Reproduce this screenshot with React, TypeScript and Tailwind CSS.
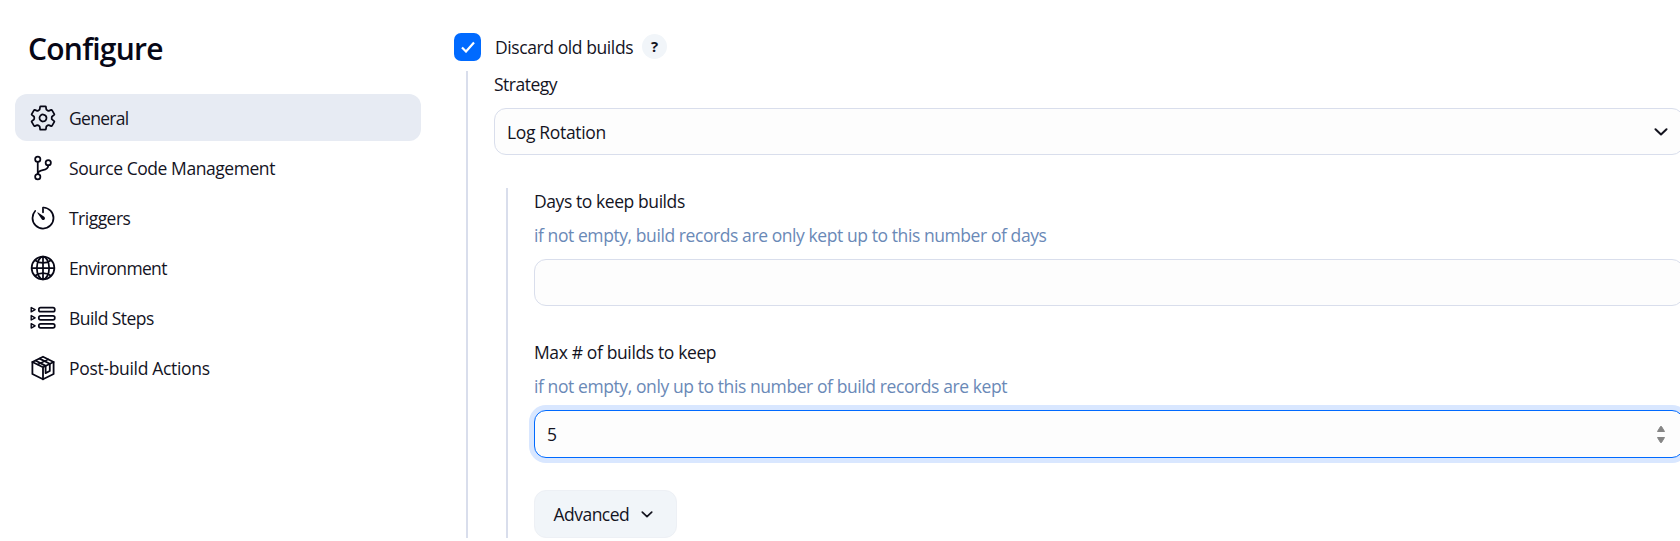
import type { ReactNode } from "react";
import { IoSettingsOutline, IoGitBranchOutline, IoTimerOutline, IoGlobeOutline } from "react-icons/io5";

function StepsIcon() {
  return (
    <svg viewBox="0 0 26 26" className="size-[26px]" fill="none" stroke="currentColor" strokeWidth="1.7" strokeLinejoin="round">
      <path d="M1.200 2.500v4.400l3.900-2.200zM1.200 10.600v4.400l3.900-2.200zM1.200 18.700v4.400l3.900-2.200z" strokeWidth="1.400" />
      <rect x="8.800" y="2.700" width="16" height="4" rx="1.800" />
      <rect x="8.800" y="10.800" width="16" height="4" rx="1.800" />
      <rect x="8.800" y="18.900" width="16" height="4" rx="1.800" />
    </svg>
  );
}

function PackageIcon() {
  return (
    <svg viewBox="0 0 26 26" className="size-[26px]" fill="none" stroke="currentColor" strokeWidth="1.8" strokeLinejoin="round" strokeLinecap="round">
      <path d="M13 1.700 23.600 7v12L13 24.300 2.400 19V7z" />
      <path d="M2.400 7 13 12.300 23.600 7M13 12.300v12" />
      <path d="M9.600 3.600 19.800 8.700v7.300l-4.200 2.100V10.900L5.900 5.800" />
      <path d="M7.700 9.500 18.300 4.300" strokeWidth="1.400" />
    </svg>
  );
}

function Chevron({ className }: { className: string }) {
  return (
    <svg viewBox="0 0 14 8" className={className} fill="none" stroke="#14141f" strokeWidth="2" strokeLinecap="round" strokeLinejoin="round">
      <path d="m1.500 1.200 5.500 5.300 5.500-5.300" />
    </svg>
  );
}

const items: { label: string; icon: ReactNode; active?: boolean; tracking: string }[] = [
  { label: "General", icon: <IoSettingsOutline />, active: true, tracking: "tracking-[-0.7px]" },
  { label: "Source Code Management", icon: <IoGitBranchOutline />, tracking: "tracking-[-0.44px]" },
  { label: "Triggers", icon: <IoTimerOutline />, tracking: "tracking-[-0.52px]" },
  { label: "Environment", icon: <IoGlobeOutline />, tracking: "tracking-[-0.66px]" },
  { label: "Build Steps", icon: <StepsIcon />, tracking: "tracking-[-0.56px]" },
  { label: "Post-build Actions", icon: <PackageIcon />, tracking: "tracking-[-0.32px]" },
];

export default function App() {
  return (
    <div className="flex h-[541px] w-[1680px] overflow-hidden bg-white font-['Open_Sans',sans-serif] text-[17.5px] text-[#14141f]">
      <aside className="w-[454px] shrink-0 pt-[28px] pl-[15px]">
        <h1 className="h-[66px] pl-[13px] text-[30px] leading-[41px] font-semibold tracking-[-0.75px] text-[#070716]">Configure</h1>
        <nav className="flex w-[406px] flex-col gap-[3px]">
          {items.map((i) => (
            <a key={i.label} className={`flex h-[47px] items-center rounded-xl pl-[13.5px] ${i.active ? "bg-[#e7ebf3]" : ""}`}>
              <span className="flex size-7 items-center justify-center text-[28px] text-[#070716]">{i.icon}</span>
              <span className={`ml-[12.5px] pt-[2px] ${i.tracking}`}>{i.label}</span>
            </a>
          ))}
        </nav>
      </aside>
      <main className="w-[1230px] shrink-0 pt-[33px]">
        <div className="flex h-[38px] items-start">
          <span className="flex h-7 w-[27px] items-center justify-center rounded-[7px] bg-[#006aff]">
            <svg viewBox="0 0 14 12" className="h-3 w-3.5" fill="none" stroke="white" strokeWidth="2.2"><path d="m1 6.500 4 4L13 1.500" /></svg>
          </span>
          <span className="ml-3.5 leading-[28px] tracking-[-0.41px]">Discard old builds</span>
          <span className="mt-px ml-[9px] flex size-[25px] items-center justify-center rounded-full bg-[#f1f5f9] text-[15px] font-bold">?</span>
        </div>
        <div className="ml-3 h-[467px] border-l-2 border-[#d9deec] pl-[26px]">
          <div className="h-[37px] leading-[26px] tracking-[-0.5px]">Strategy</div>
          <div className="flex h-[47px] items-center justify-between rounded-xl border border-[#d9deec] bg-[#fdfdfd] pr-[15px] pl-3">
            <span className="pt-[2px] tracking-[-0.34px]">Log Rotation</span>
            <Chevron className="h-2 w-3.5" />
          </div>
          <div className="mt-[33px] ml-3 h-[350px] border-l-2 border-[#d9deec] pl-[26px]">
            <div className="h-[34px] leading-[26px] tracking-[-0.42px]">Days to keep builds</div>
            <div className="h-[37px] leading-[26px] tracking-[-0.42px] text-[#6a89b7]">if not empty, build records are only kept up to this number of days</div>
            <div className="h-[47px] rounded-xl border border-[#d9deec] bg-[#fdfdfd]" />
            <div className="mt-[33px] h-[34px] leading-[26px] tracking-[-0.37px]">Max # of builds to keep</div>
            <div className="h-[37px] leading-[26px] tracking-[-0.41px] text-[#6a89b7]">if not empty, only up to this number of build records are kept</div>
            <div className="flex h-12 items-center justify-between rounded-xl border border-[#006aff] bg-[#fdfdfd] pr-[18px] pl-3 ring-5 ring-[#d9e7ff]">
              <span>5</span>
              <svg viewBox="0 0 8 17" className="h-[17px] w-2" fill="#858585" stroke="#858585" strokeWidth="1" strokeLinejoin="round"><path d="M3.500 .500h1L7.500 5.500h-7zM3.500 16.500h1L7.500 11.500h-7z" /></svg>
            </div>
            <div className="mt-8 flex h-12 w-[143px] items-center rounded-xl border border-[#edf0f5] bg-[#f1f5f9] pl-[18.5px]">
              <span className="tracking-[-0.52px]">Advanced</span>
              <Chevron className="ml-3 h-[7px] w-3" />
            </div>
          </div>
        </div>
      </main>
    </div>
  );
}
